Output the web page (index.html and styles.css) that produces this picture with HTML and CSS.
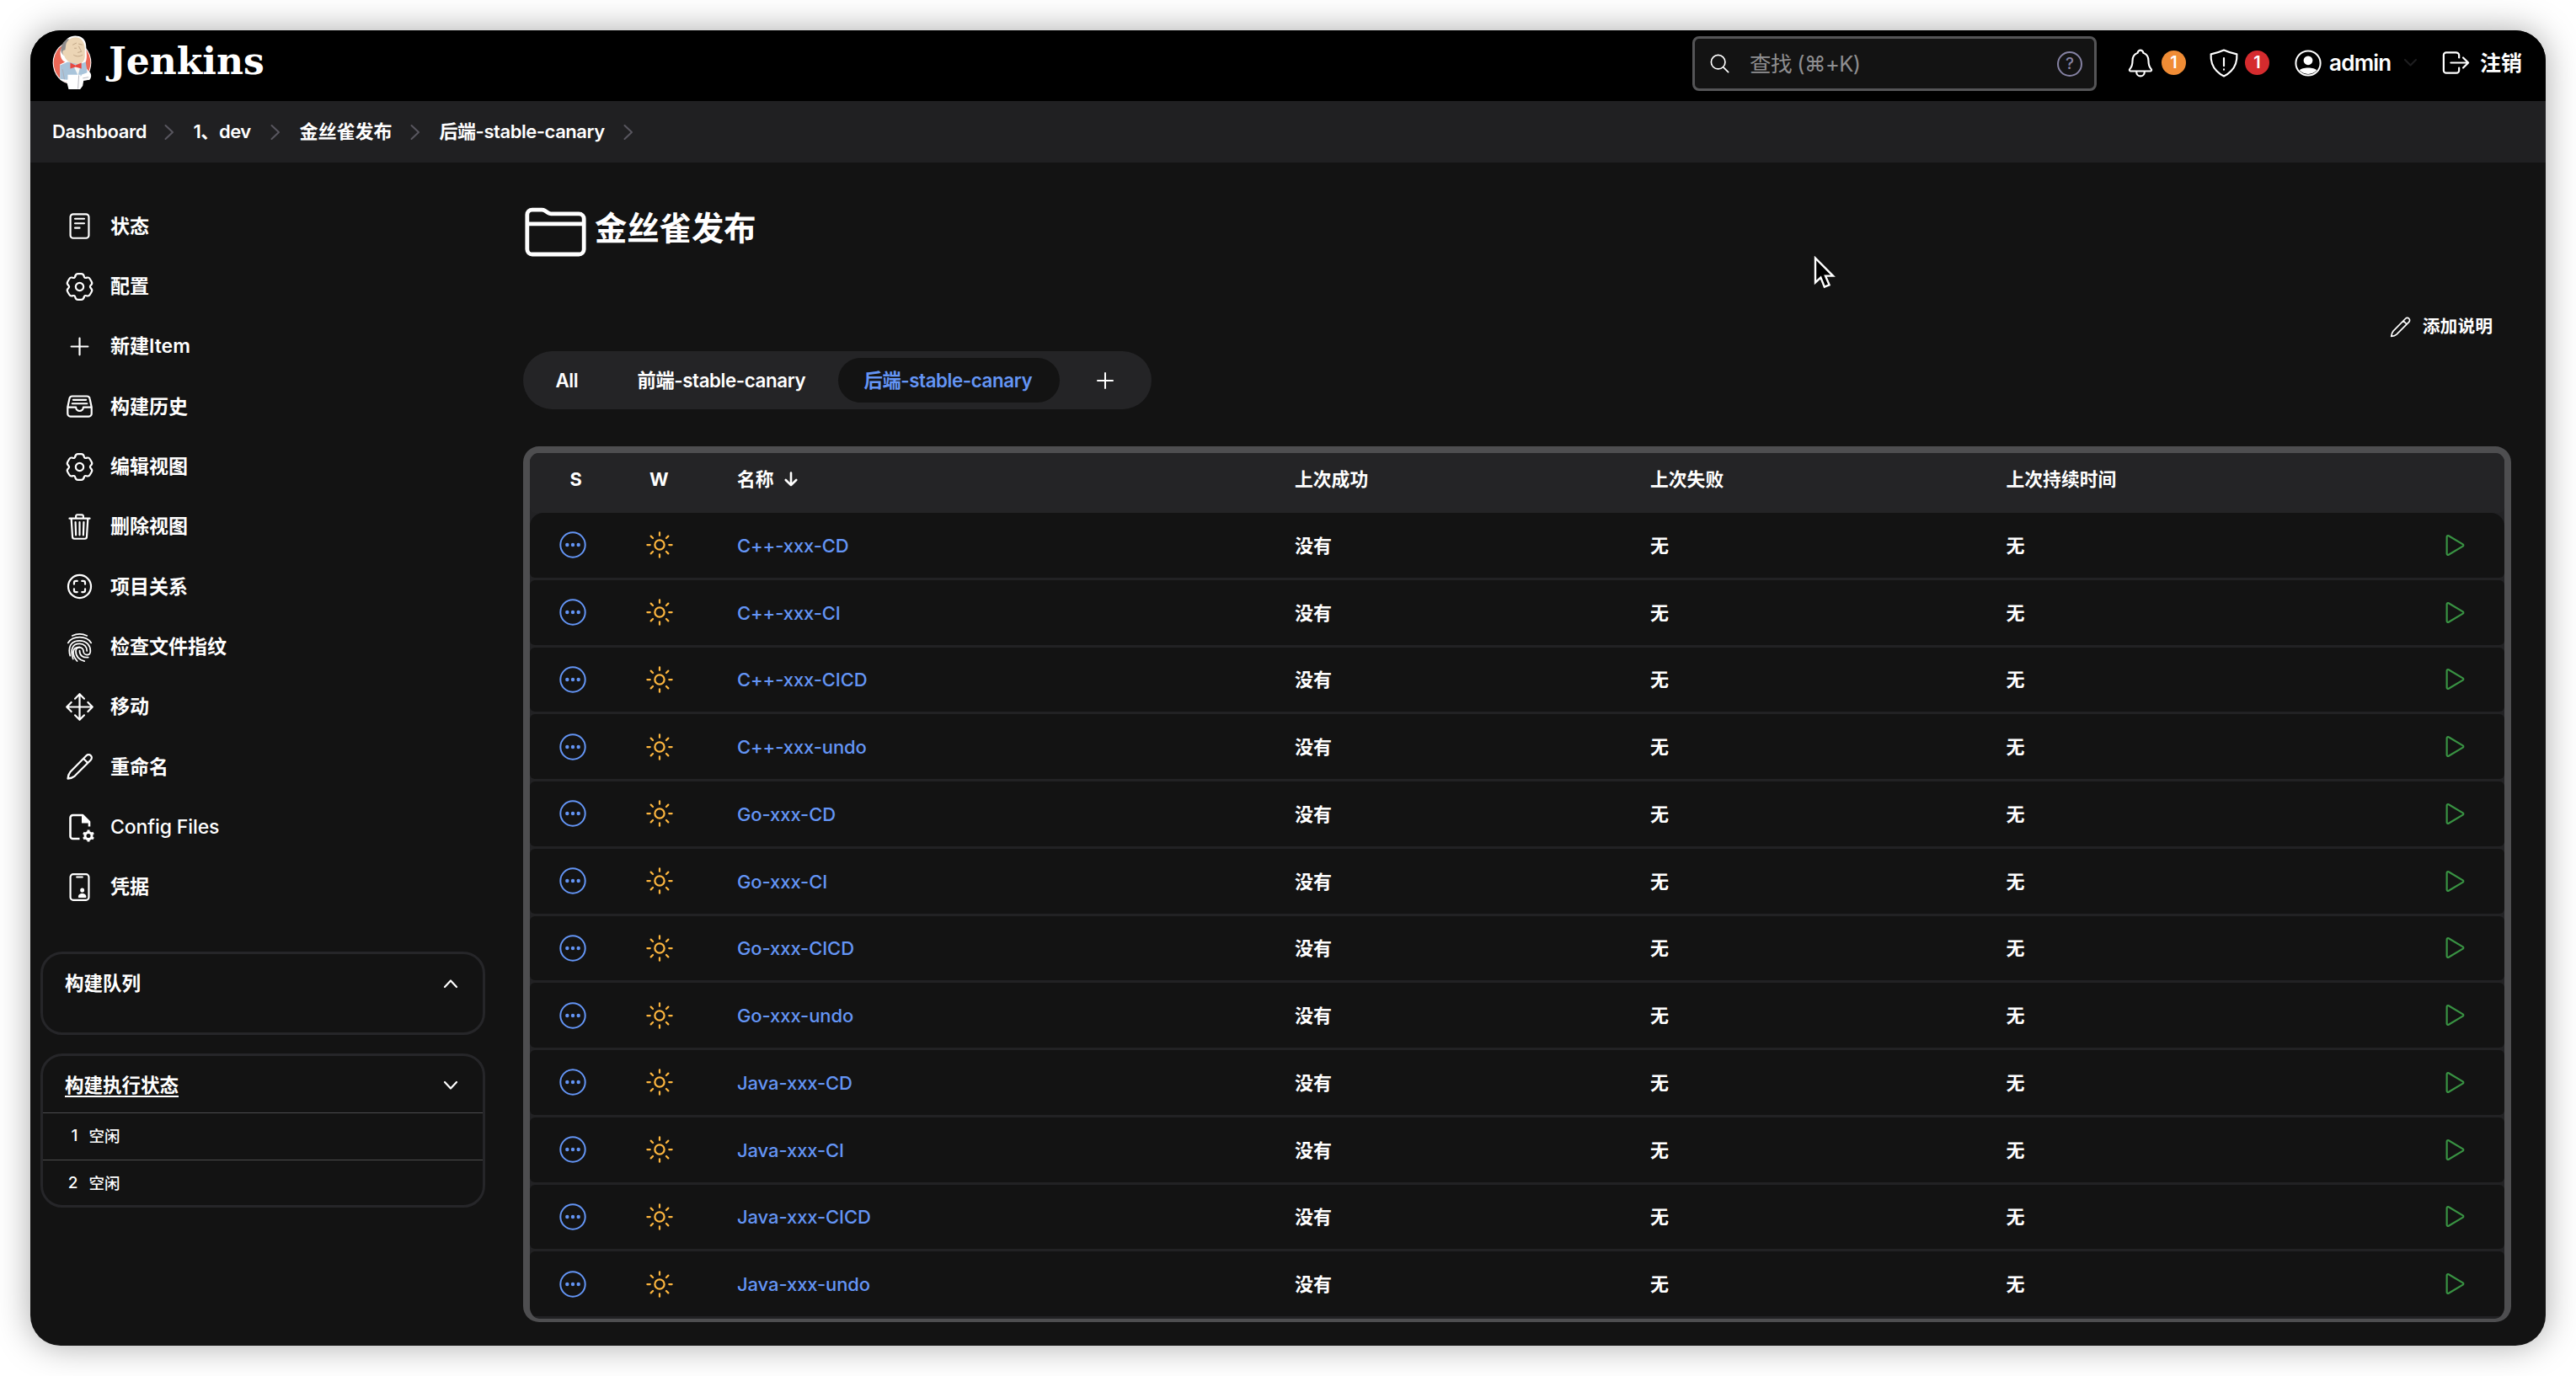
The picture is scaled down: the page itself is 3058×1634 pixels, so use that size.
FILE: index.html
```html
<!DOCTYPE html>
<html lang="zh-CN">
<head>
<meta charset="utf-8">
<title>后端-stable-canary [Jenkins]</title>
<link rel="stylesheet" href="styles.css">
</head>
<body>
<svg class="sprite" aria-hidden="true">
  <symbol id="search" viewBox="0 0 512 512"><path d="M221.09 64a157.09 157.09 0 10157.09 157.09A157.1 157.1 0 00221.09 64zM338.29 338.29L448 448"/></symbol>
  <symbol id="bell" viewBox="0 0 512 512"><path d="M427.68 351.43C402 320 383.87 304 383.87 217.35 383.87 138 343.35 109.73 310 96c-4.43-1.82-8.6-6-9.95-10.55C294.2 65.54 277.8 48 256 48s-38.21 17.55-44 37.47c-1.35 4.6-5.52 8.71-9.95 10.53-33.39 13.75-73.87 41.92-73.87 121.35C128.13 304 110 320 84.32 351.43 73.68 364.45 83 384 101.61 384h308.88c18.51 0 27.77-19.61 17.19-32.57zM320 384v16a64 64 0 01-128 0v-16"/></symbol>
  <symbol id="shield" viewBox="0 0 512 512"><path d="M463.1 112.37C373.68 96.33 336.71 84.45 256 48c-80.71 36.45-117.68 48.33-207.1 64.37C32.7 369.13 240.58 457.79 256 464c15.42-6.21 223.3-94.87 207.1-351.63zM256 176v124M256 356v4"/></symbol>
  <symbol id="user" viewBox="0 0 32 32"><circle cx="16" cy="16" r="14.6" stroke-width="2"/><circle cx="16" cy="12.8" r="5.4" fill="currentColor" stroke="none"/><path d="M5.8 24.6C8 20.6 24 20.6 26.2 24.6A14 14 0 0 1 5.8 24.6z" fill="currentColor" stroke="none"/></symbol>
  <symbol id="logout" viewBox="0 0 512 512"><path d="M304 336v40a40 40 0 01-40 40H104a40 40 0 01-40-40V136a40 40 0 0140-40h152c22.09 0 48 17.91 48 40v40M368 336l80-80-80-80M176 256h256"/></symbol>
  <symbol id="doc" viewBox="0 0 512 512"><rect x="96" y="48" width="320" height="416" rx="48"/><path d="M176 128h160M176 208h160M176 288h80"/></symbol>
  <symbol id="gear" viewBox="-12 -12 24 24">
    <g id="tooth"><path stroke-width="1.5" d="M-3.54-8.59Q-3.19-10.5-1.3-10.5H1.3Q3.19-10.5 3.54-8.59Q3.9-6.75 5.67-7.36"/></g>
    <use href="#tooth" transform="rotate(60)"/><use href="#tooth" transform="rotate(120)"/><use href="#tooth" transform="rotate(180)"/><use href="#tooth" transform="rotate(240)"/><use href="#tooth" transform="rotate(300)"/>
    <circle r="3.2" stroke-width="1.5"/>
  </symbol>
  <symbol id="add" viewBox="0 0 512 512"><path d="M256 112v288M400 256H112"/></symbol>
  <symbol id="tray" viewBox="0 0 512 512"><path d="M384 80H128c-26 0-43 14-48 40L48 272v112a48.14 48.14 0 0048 48h320a48.14 48.14 0 0048-48V272l-32-152c-5-27-23-40-48-40zM48 272h144M320 272h144M192 272a64 64 0 00128 0M144 144h224M128 208h256"/></symbol>
  <symbol id="trash" viewBox="0 0 512 512"><path d="M112 112l20 320c.95 18.49 14.4 32 32 32h184c17.67 0 30.87-13.51 32-32l20-320M80 112h352M192 112V72a23.93 23.93 0 0124-24h80a23.93 23.93 0 0124 24v40M256 176v224M184 176l8 224M328 176l-8 224"/></symbol>
  <symbol id="scan" viewBox="0 0 512 512"><circle cx="256" cy="256" r="198"/><path d="M296 352h24a32 32 0 0032-32v-24M352 216v-24a32 32 0 00-32-32h-24M216 160h-24a32 32 0 00-32 32v24M160 296v24a32 32 0 0032 32h24"/></symbol>
  <symbol id="finger" viewBox="0 0 24 24"><g stroke-width="1.2"><path d="M6 2.7Q12 0 18 2.7M2.6 8.5C6.6 2.4 17.4 2.4 21.4 8.5"/><path d="M4.3 19C2.4 12.5 4.5 6.7 12 6.7c6 0 8.8 4.4 8.8 8.3 0 4.4-5.6 4.2-5.7.2-.1-4-6.2-4-6.2 0 0 4.4 3 7.4 7 8.2"/><path d="M6.7 21.6C4.2 14 6 9.2 12 9.2c3.8 0 6 2.5 6 5.8"/><path d="M10 23.3C5.4 18 5.6 11.9 12 11.9M12 14.9c0 3.8 2.5 5.9 7 5.4"/></g></symbol>
  <symbol id="move" viewBox="0 0 512 512"><path d="M176 112l80-80 80 80M256 32v448M176 400l80 80 80-80M400 176l80 80-80 80M112 176l-80 80 80 80M32 256h448"/></symbol>
  <symbol id="pencil" viewBox="0 0 24 24"><path stroke-width="1.5" d="M2.4 21.7C2.6 19.6 3.2 17.6 4.5 16.1L17.5 2.9a2.5 2.5 0 0 1 3.6 3.6L8 19.6C6.5 20.9 4.5 21.5 2.4 21.7zM15.1 5.3l3.6 3.6"/></symbol>
  <symbol id="config" viewBox="0 0 35 35"><path stroke-width="2.6" stroke-linecap="butt" d="M17.5 31H9.5a3 3 0 0 1-3-3V6a3 3 0 0 1 3-3H21l8 8v5.5"/><path fill="currentColor" stroke="none" d="M20 2.5L30 12.5H20z"/><circle cx="28" cy="27.5" r="4" stroke-width="3"/><path stroke-width="3" stroke-linecap="butt" d="M28 20.4v2.8M28 31.8v2.8M21.9 24l2.4 1.4M31.7 29.6l2.4 1.4M21.9 31l2.4-1.4M31.7 25.400l2.4-1.4"/></symbol>
  <symbol id="card" viewBox="0 0 512 512"><rect x="96" y="32" width="320" height="448" rx="48"/><path d="M208 80h96"/><g fill="currentColor" stroke="none"><ellipse cx="302" cy="308" rx="36" ry="38"/><path d="M232 424c0-44 36-60 70-60s70 16 70 60c0 8-6 14-14 14H246c-8 0-14-6-14-14z"/></g></symbol>
  <symbol id="folder" viewBox="0 0 512 512"><path d="M440 432H72a40 40 0 01-40-40V120a40 40 0 0140-40h75.89a40 40 0 0122.19 6.72l27.84 18.56a40 40 0 0022.19 6.72H440a40 40 0 0140 40v240a40 40 0 01-40 40zM32 192h448"/></symbol>
  <symbol id="play" viewBox="0 0 512 512"><path d="M112 111v290c0 17.44 17 28.52 31 20.16l247.9-148.37c12.12-7.25 12.12-26.33 0-33.58L143 90.84c-14-8.36-31 2.72-31 20.16z"/></symbol>
  <symbol id="sun" viewBox="0 0 512 512"><circle cx="256" cy="256" r="80"/><path d="M256 48v48M256 416v48M403.08 108.92l-33.94 33.94M142.86 369.14l-33.94 33.94M464 256h-48M96 256H48M403.08 403.08l-33.94-33.94M142.86 142.86l-33.94-33.94"/></symbol>
  <symbol id="idle" viewBox="0 0 32 32"><circle cx="16" cy="16" r="14.7" stroke-width="2"/><g fill="currentColor" stroke="none"><circle cx="9.3" cy="16" r="2.2"/><circle cx="16" cy="16" r="2.2"/><circle cx="22.7" cy="16" r="2.2"/></g></symbol>
  <symbol id="sep" viewBox="0 0 12 20"><path stroke-width="2" d="M1.5 2L10 10L1.5 18"/></symbol>
</svg>

<div class="window">
  <header class="top">
    <a class="brand">
      <svg class="butler" viewBox="0 0 46 64">
        <ellipse cx="23" cy="32" rx="22.5" ry="25" fill="#fff"/>
        <ellipse cx="23" cy="32" rx="21.5" ry="24" fill="#ec6857"/>
        <path d="M13 12C15 2 24-1 31 1c7 2 9 8 8.5 15 1 6 1 13-1 16l1 6 3 4c3 1 4 7 1 10l-7 1-1 6-3 4H19l-2-8-8-3V34l6-3c-5-1-7-10-5-15z" fill="#fff"/>
        <path d="M10 17c0-7 5-12 9-13l2 8-5 12c-3 0-6-3-6-7z" fill="#8e8c8d"/>
        <path d="M16 10C19 2 29 0 34 5c5 5 4 12 4 17 1 8-4 12-10 12-7 0-13-6-14-10-3-3-3-7 1-7z" fill="#ecd5b5"/>
        <path d="M24 11l4-2M31 10l4 1M31 13l3 6-4 1M25 23c3 2 7 2 10 0M26 15h2" fill="none" stroke="#b79c7e" stroke-width=".8"/>
        <path d="M9 35l9-4 13 3 8-3 2 14-9 3-15 4-8-1z" fill="#a9c4da"/>
        <path d="M24 34l9 1-3 12z" fill="#f6f6f4"/>
        <path d="M21 32l6 3 7-3v7l-7-2-6 2z" fill="#e8483f"/>
        <path d="M18 46h15l-1 10-1 7H21l-3-9zM34 46l8-3 3 3-2 6-9 1z" fill="#fff"/>
        <path d="M31 47l-1 15M12 40l2 11M36 50l6-1" fill="none" stroke="#a9a9b2" stroke-width=".8"/>
      </svg>
      <span class="wordmark">Jenkins</span>
    </a>
    <label class="search"><svg class="i27"><use href="#search"/></svg><span class="ph">查找 (⌘+K)</span><span class="help">?</span></label>
    <div class="acts">
      <svg class="i38"><use href="#bell"/></svg><b class="badge orange">1</b>
      <svg class="i38 shield"><use href="#shield"/></svg><b class="badge red">1</b>
      <svg class="i32 user"><use href="#user"/></svg><span class="uname">admin</span>
      <svg class="caret" viewBox="0 0 15 9"><path d="M1 1l6.5 6.5L14 1" stroke-width="2"/></svg>
      <svg class="i39"><use href="#logout"/></svg><span class="out">注销</span>
    </div>
  </header>

  <nav class="crumbs">
    <a class="c1">Dashboard</a><svg><use href="#sep"/></svg>
    <a class="c2">1、dev</a><svg><use href="#sep"/></svg>
    <a class="c3">金丝雀发布</a><svg><use href="#sep"/></svg>
    <a class="c4">后端-stable-canary</a><svg><use href="#sep"/></svg>
  </nav>

  <div class="body">
    <aside>
      <ul class="tasks">
        <li><svg><use href="#doc"/></svg>状态</li>
        <li><svg><use href="#gear"/></svg>配置</li>
        <li><svg><use href="#add"/></svg>新建Item</li>
        <li><svg><use href="#tray"/></svg>构建历史</li>
        <li><svg><use href="#gear"/></svg>编辑视图</li>
        <li><svg><use href="#trash"/></svg>删除视图</li>
        <li><svg><use href="#scan"/></svg>项目关系</li>
        <li><svg><use href="#finger"/></svg>检查文件指纹</li>
        <li><svg><use href="#move"/></svg>移动</li>
        <li><svg><use href="#pencil"/></svg>重命名</li>
        <li class="latin"><svg><use href="#config"/></svg>Config Files</li>
        <li><svg><use href="#card"/></svg>凭据</li>
      </ul>
      <section class="pane queue">
        <h2><span>构建队列</span><svg viewBox="0 0 18 12"><path d="M2 10L9 2.5L16 10"/></svg></h2>
      </section>
      <section class="pane exec">
        <h2><span class="link">构建执行状态</span><svg viewBox="0 0 18 12"><path d="M2 2L9 9.5L16 2"/></svg></h2>
        <p><b>1</b>空闲</p>
        <p><b>2</b>空闲</p>
      </section>
    </aside>

    <main>
      <h1><svg><use href="#folder"/></svg><span>金丝雀发布</span></h1>
      <div class="desc"><svg><use href="#pencil"/></svg>添加说明</div>
      <div class="tabs"><a class="all">All</a><a class="fe">前端-stable-canary</a><a class="on">后端-stable-canary</a><svg><use href="#add"/></svg></div>
      <div class="table">
        <div class="row head"><span class="s">S</span><span class="w">W</span><span>名称<svg class="sort" viewBox="0 0 16 18"><path d="M8 1.5V16M1.8 10L8 16.2L14.2 10"/></svg></span><span>上次成功</span><span>上次失败</span><span>上次持续时间</span></div>
        <div class="row"><svg class="st"><use href="#idle"/></svg><svg class="we"><use href="#sun"/></svg><a>C++-xxx-CD</a><span>没有</span><span>无</span><span>无</span><svg class="go"><use href="#play"/></svg></div>
        <div class="row"><svg class="st"><use href="#idle"/></svg><svg class="we"><use href="#sun"/></svg><a>C++-xxx-CI</a><span>没有</span><span>无</span><span>无</span><svg class="go"><use href="#play"/></svg></div>
        <div class="row"><svg class="st"><use href="#idle"/></svg><svg class="we"><use href="#sun"/></svg><a>C++-xxx-CICD</a><span>没有</span><span>无</span><span>无</span><svg class="go"><use href="#play"/></svg></div>
        <div class="row"><svg class="st"><use href="#idle"/></svg><svg class="we"><use href="#sun"/></svg><a>C++-xxx-undo</a><span>没有</span><span>无</span><span>无</span><svg class="go"><use href="#play"/></svg></div>
        <div class="row"><svg class="st"><use href="#idle"/></svg><svg class="we"><use href="#sun"/></svg><a>Go-xxx-CD</a><span>没有</span><span>无</span><span>无</span><svg class="go"><use href="#play"/></svg></div>
        <div class="row"><svg class="st"><use href="#idle"/></svg><svg class="we"><use href="#sun"/></svg><a>Go-xxx-CI</a><span>没有</span><span>无</span><span>无</span><svg class="go"><use href="#play"/></svg></div>
        <div class="row"><svg class="st"><use href="#idle"/></svg><svg class="we"><use href="#sun"/></svg><a>Go-xxx-CICD</a><span>没有</span><span>无</span><span>无</span><svg class="go"><use href="#play"/></svg></div>
        <div class="row"><svg class="st"><use href="#idle"/></svg><svg class="we"><use href="#sun"/></svg><a>Go-xxx-undo</a><span>没有</span><span>无</span><span>无</span><svg class="go"><use href="#play"/></svg></div>
        <div class="row"><svg class="st"><use href="#idle"/></svg><svg class="we"><use href="#sun"/></svg><a>Java-xxx-CD</a><span>没有</span><span>无</span><span>无</span><svg class="go"><use href="#play"/></svg></div>
        <div class="row"><svg class="st"><use href="#idle"/></svg><svg class="we"><use href="#sun"/></svg><a>Java-xxx-CI</a><span>没有</span><span>无</span><span>无</span><svg class="go"><use href="#play"/></svg></div>
        <div class="row"><svg class="st"><use href="#idle"/></svg><svg class="we"><use href="#sun"/></svg><a>Java-xxx-CICD</a><span>没有</span><span>无</span><span>无</span><svg class="go"><use href="#play"/></svg></div>
        <div class="row"><svg class="st"><use href="#idle"/></svg><svg class="we"><use href="#sun"/></svg><a>Java-xxx-undo</a><span>没有</span><span>无</span><span>无</span><svg class="go"><use href="#play"/></svg></div>
      </div>
    </main>
  </div>
</div>
<svg class="cursor" viewBox="0 0 26 40"><path d="M2 2.5V31.5L8.4 25.6L12.8 36.6L18.6 34.3L14 23.6H23z"/></svg>
</body>
</html>
```
FILE: styles.css
```css
* { box-sizing: border-box; margin: 0; padding: 0; }
body {
  width: 3058px; height: 1634px; padding: 36px; overflow: hidden;
  background: #fff; color: #fff;
  font-family: Inter, "Noto Sans CJK SC", "DejaVu Sans", sans-serif;
  font-size: 22px; font-weight: 500; line-height: 30px;
}
svg { display: block; flex: none; fill: none; stroke: currentColor; stroke-width: 32; stroke-linecap: round; stroke-linejoin: round; }
.sprite { position: absolute; width: 0; height: 0; }
.window {
  width: 2986px; height: 1562px; border-radius: 36px; overflow: hidden;
  background: #131313; box-shadow: 0 0 40px rgba(0, 0, 0, .34);
  display: flex; flex-direction: column;
}

/* top bar */
.top { height: 84px; background: #000; display: flex; align-items: flex-start; padding: 6px 0 0 26px; flex: none; }
.brand { display: flex; align-items: flex-start; width: 1947px; }
.butler { width: 47px; height: 65px; stroke: none; }
.wordmark { font: bold 44px/50px "DejaVu Serif", serif; margin: 6px 0 0 20px; }
.search {
  width: 480px; height: 65px; margin-top: 1px; border: 3px solid #555557; border-radius: 8px; background: #131313;
  display: flex; align-items: center; padding: 0 14px 0 16px;
}
.i27 { width: 27px; height: 27px; }
.ph { margin-left: 22px; font-size: 25.5px; font-weight: 400; color: #8e8e90; flex: 1; letter-spacing: -.6px; }
.help { width: 30px; height: 30px; border: 2px solid #8582a3; border-radius: 50%; color: #8582a3; font-size: 19px; line-height: 26px; text-align: center; }
.acts { display: flex; align-items: center; height: 65px; margin-left: 33px; }
.i38 { width: 38px; height: 38px; stroke-width: 29; }
.i32 { width: 32px; height: 32px; }
.i39 { width: 39px; height: 39px; stroke-width: 29; }
.badge { width: 29px; height: 29px; border-radius: 50%; font-size: 20px; font-weight: 600; line-height: 29px; text-align: center; margin-left: 6px; }
.orange { background: #f08c35; }
.red { background: #d52b2e; }
.shield { margin-left: 26px; }
.user { margin-left: 30px; }
.uname { width: 87px; margin-left: 9px; font-size: 26px; font-weight: 600; letter-spacing: -.75px; padding-top: 1px; }
.caret { width: 15px; height: 9px; color: #1e1e20; margin: 0 27px 0 2px; }
.out { margin-left: 9px; font-size: 25px; font-weight: 600; padding-top: 1px; }

/* breadcrumbs */
.crumbs { height: 73px; background: #202022; display: flex; align-items: center; padding-left: 26px; flex: none; font-weight: 600; }
.crumbs a { white-space: nowrap; letter-spacing: -.45px; margin-top: -1px; }
.crumbs svg { width: 12px; height: 20px; color: #58565f; margin-right: 23px; margin-top: 1px; }
.c1 { width: 132.5px; } .c2 { width: 91px; } .c3 { width: 131px; } .c4 { width: 218px; }
.crumbs .c3 { letter-spacing: 0; }

.body { display: flex; flex: 1; }

/* side panel */
aside { width: 540px; padding: 40px 0 0 12px; }
.tasks { list-style: none; }
.tasks li { height: 71.35px; display: flex; align-items: center; gap: 19px; padding-left: 29px; font-size: 23px; font-weight: 600; }
.tasks .latin { font-weight: 500; letter-spacing: -.1px; }
.tasks svg { width: 35px; height: 35px; }
.pane { width: 528px; border: 3px solid #262629; border-radius: 26px; }
.pane h2 { font-size: 22.5px; font-weight: 600; display: flex; justify-content: space-between; align-items: center; padding: 2px 29px 0 26px; height: 67px; }
.pane h2 svg { width: 18px; height: 12px; stroke-width: 2.2; }
.queue { height: 99px; margin-top: 41px; }
.exec { height: 183px; margin-top: 22px; }
.link { text-decoration: underline; text-decoration-thickness: 2px; text-underline-offset: 4px; }
.exec p { border-top: 1px solid #4c4c4e; height: 56px; display: flex; align-items: center; font-size: 18.5px; font-weight: 500; padding-bottom: 1px; }
.exec p b { width: 41.5px; font-weight: 500; text-align: right; margin-right: 13px; font-size: 19px; }

/* main panel */
main { padding: 44px 0 0 45px; width: 2405px; }
h1 { height: 77px; display: flex; align-items: center; gap: 8px; font-size: 38.3px; font-weight: 700; line-height: 46px; }
h1 svg { width: 77px; height: 77px; }
h1 span { padding-bottom: 9px; }
.desc { margin-top: 56px; height: 36px; display: flex; align-items: center; justify-content: flex-end; gap: 13px; padding-right: 22px; font-size: 20.8px; font-weight: 600; }
.desc svg { width: 27px; height: 27px; }
.tabs { margin-top: 11px; width: 746px; height: 69px; border-radius: 35px; background: #242426; display: flex; align-items: center; padding-left: 8px; font-size: 22.3px; font-weight: 600; letter-spacing: -.4px; }
.tabs a { height: 53px; line-height: 53px; padding-left: 30.5px; white-space: nowrap; border-radius: 27px; }
.all { width: 97px; } .fe { width: 269px; }
.on { width: 263px; background: #131313; color: #6495f5; }
.tabs svg { width: 32px; height: 32px; margin-left: 38px; }
.table {
  margin-top: 44px; width: 2360px; border: 8px solid #4e4e50; border-bottom-width: 4px; border-radius: 19px;
  background: #222224; display: flex; flex-direction: column; gap: 3px; padding-bottom: 3px; overflow: hidden;
}
.row {
  height: 76.75px; background: #131313; border-radius: 6px; padding: 0 41px 0 34px;
  display: grid; grid-template-columns: 105px 107px 662px 422px 422.5px 1fr 35px; align-items: center;
}
.head { height: 71px; background: #242426; font-size: 21.8px; padding-bottom: 9px; margin-bottom: -3px; }
.head + .row { border-radius: 16px 16px 6px 6px; }
.row span { font-weight: 600; padding-top: 1px; }
.head span { display: flex; align-items: center; font-weight: 700; padding-top: 0; }
.head .s { padding-left: 13.5px; } .head .w { padding-left: 3px; }
.sort { width: 16px; height: 18px; margin-left: 12px; stroke-width: 2.6; }
.row a { color: #6495f5; font-weight: 500; font-size: 22px; letter-spacing: -.1px; padding-top: 1px; }
.st { width: 32px; height: 32px; color: #6495f5; margin-left: .5px; }
.we { width: 36px; height: 36px; color: #fdb63f; margin-left: -3.5px; }
.go { width: 35px; height: 35px; color: #399343; grid-column: 7; }
.cursor { position: absolute; left: 2153px; top: 304px; width: 26px; height: 40px; fill: #000; stroke: #fff; stroke-width: 2.4; stroke-linejoin: miter; }
```
